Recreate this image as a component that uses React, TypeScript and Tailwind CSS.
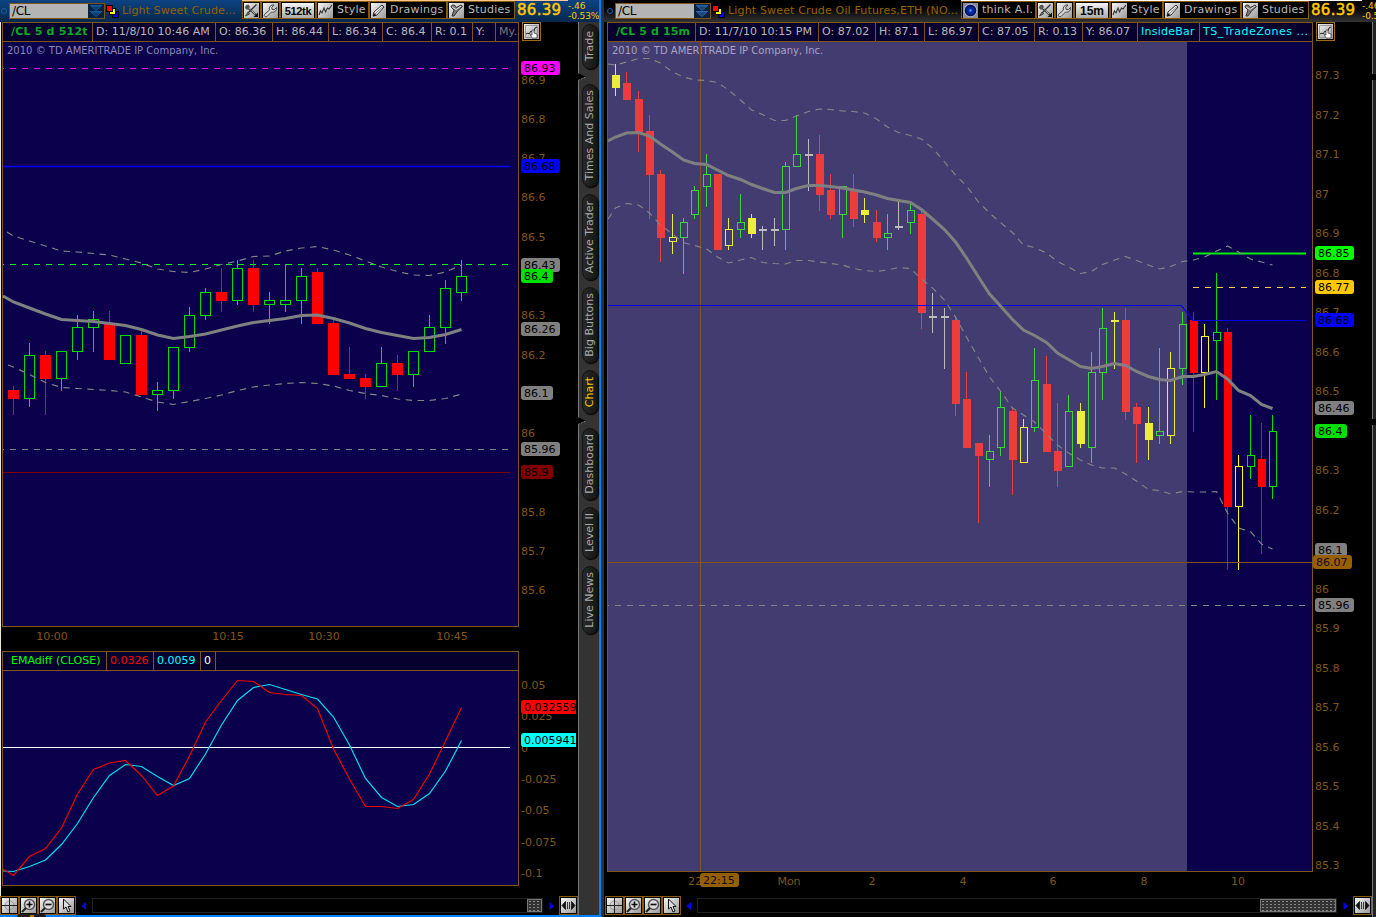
import React from "react"

const BROWN = "#80551a"
const GREY = "#808080"

type Candle = [string, number, number, number, number]
type Label = [number, string, string?]

// kind, body top, body bottom, wick top, wick bottom
// R red, G green outline, Y yellow solid, y yellow outline, W dash
const tickCandles: Candle[] = [
  ["R", 390, 399, 386, 415], ["G", 355, 399, 343, 407], ["R", 355, 379, 351, 415], ["G", 351, 379, 351, 391],
  ["G", 327, 352, 315, 360], ["G", 319, 328, 311, 352], ["R", 324, 360, 311, 360], ["G", 335, 364, 335, 364],
  ["R", 335, 395, 331, 395], ["G", 390, 395, 382, 411], ["G", 347, 391, 347, 399], ["G", 315, 348, 307, 352],
  ["G", 292, 316, 288, 320], ["R", 292, 301, 268, 312], ["G", 268, 301, 260, 305], ["R", 268, 305, 260, 312],
  ["G", 300, 305, 292, 324], ["G", 300, 305, 264, 312], ["G", 276, 301, 268, 324], ["R", 272, 324, 268, 324],
  ["R", 323, 375, 320, 375], ["R", 374, 379, 347, 379], ["R", 378, 387, 374, 399], ["G", 363, 387, 347, 387],
  ["R", 363, 375, 355, 391], ["G", 351, 375, 351, 387], ["G", 327, 352, 315, 352], ["G", 288, 328, 280, 344],
  ["G", 276, 293, 260, 301],
]

const minuteCandles: Candle[] = [
  ["Y", 75, 88, 64, 96], ["R", 83, 100, 72, 100], ["R", 99, 132, 91, 152], ["R", 131, 175, 115, 219],
  ["R", 174, 238, 170, 262], ["y", 237, 242, 214, 254], ["G", 222, 238, 218, 274], ["G", 190, 215, 186, 219],
  ["G", 174, 187, 154, 207], ["R", 174, 250, 174, 250], ["y", 229, 246, 218, 250], ["G", 222, 230, 194, 238],
  ["Y", 218, 234, 214, 238], ["W", 229, 231, 226, 250], ["W", 229, 231, 218, 246], ["G", 166, 230, 162, 250],
  ["G", 154, 167, 115, 167], ["W", 154, 156, 139, 191], ["R", 154, 195, 135, 211], ["R", 190, 215, 174, 219],
  ["G", 186, 215, 186, 238], ["R", 191, 219, 174, 227], ["Y", 210, 215, 198, 223], ["R", 222, 238, 210, 242],
  ["G", 233, 238, 214, 250], ["W", 226, 228, 202, 230], ["G", 210, 223, 202, 234], ["R", 214, 313, 210, 329],
  ["W", 316, 318, 293, 333], ["W", 316, 318, 308, 369], ["R", 320, 404, 316, 416], ["R", 399, 448, 372, 448],
  ["R", 443, 456, 443, 523], ["G", 451, 460, 435, 487], ["G", 407, 448, 391, 456], ["R", 411, 460, 407, 495],
  ["y", 427, 463, 419, 463], ["G", 380, 428, 348, 432], ["R", 384, 452, 356, 452], ["R", 451, 471, 403, 487],
  ["G", 411, 467, 395, 467], ["Y", 411, 444, 403, 448], ["G", 372, 448, 352, 463], ["G", 328, 373, 308, 400],
  ["Y", 320, 322, 312, 369], ["R", 320, 412, 308, 420], ["R", 407, 424, 403, 463], ["Y", 423, 440, 407, 460],
  ["G", 431, 436, 348, 444], ["y", 368, 436, 352, 444], ["G", 324, 369, 312, 385], ["R", 320, 373, 312, 432],
  ["y", 336, 373, 324, 408], ["G", 332, 341, 273, 400], ["R", 332, 507, 328, 570], ["y", 466, 507, 455, 570],
  ["G", 455, 467, 415, 479], ["R", 459, 487, 423, 554], ["G", 431, 487, 415, 499],
]

const tickX = (i: number) => 13 + 16 * i
const minuteX = (i: number) => 615 + Math.round((34 * i) / 3)

// first value sits on the left edge of the plot, the rest on the bars
const line = (xOf: (i: number) => number, startX: number, ys: number[]) =>
  ys.map((y, i) => `${i === 0 ? startX : xOf(i - 1) + 0.5},${y}`).join(" ")

const tickMid = [296, 302, 308, 314, 319.5, 320.5, 321.5, 323.5, 325.5, 329.5, 335, 338.5, 336.5, 334, 330, 326, 322.5, 320.5, 318.5, 315.5, 315, 318.5, 323, 328.5, 332.5, 335.5, 338.5, 337.5, 334.5, 329.5]
const tickUp = [232, 236, 241, 246, 251, 252, 253.5, 255, 259, 263, 269, 271.5, 272.5, 269, 264.5, 261, 256.5, 256, 251, 248, 246.5, 250, 255, 261, 267, 271.5, 275, 275.5, 272, 265]
const tickLow = [365, 367, 374.5, 382.5, 387.5, 388.5, 389.5, 390.5, 392, 397, 402, 404.5, 401.5, 398.5, 395, 390.5, 387, 385, 383.5, 382.5, 383.5, 386, 390.5, 393.5, 395.5, 399, 400.5, 400.5, 398.5, 394]
const emaRed = [869, 875.5, 856.5, 848.5, 828, 794, 769.5, 763, 760.5, 775.5, 795.5, 786, 756, 722, 700.5, 680.5, 681.5, 692.5, 694.5, 695.5, 708.5, 749, 779, 806.5, 806.5, 808.5, 799.5, 774, 741, 707.5]
const emaCyan = [871, 871.5, 866.5, 860, 844.5, 823.5, 797.5, 775.5, 764.5, 766.5, 776.5, 785.5, 778.5, 754, 725, 700.5, 687.5, 684.5, 689.5, 694.5, 699, 717, 745, 778.5, 797.5, 806.5, 804.5, 793.5, 771, 740.5]

const minMid = [141, 137, 133, 132.5, 136, 144, 152, 160, 163.5, 164.5, 170, 175.5, 179.5, 184.5, 188.5, 192.5, 192.5, 188.5, 185.5, 185.5, 186.5, 188, 190, 192, 195, 198.5, 200.5, 202.5, 209.5, 219, 229.5, 242, 258, 277, 294, 306, 319.5, 330, 335.5, 342.5, 353, 359.5, 366.5, 368.5, 366.5, 363.5, 365.5, 371.5, 376.5, 379.5, 380.5, 376.5, 376.5, 374.5, 371.5, 379, 390.5, 395.5, 404.5, 408.5]
const minUp = [64, 65, 62, 58.5, 58.5, 63, 72, 77, 80, 80.5, 82.5, 90, 100, 110, 114.5, 120.5, 120.5, 116, 111.5, 109, 109.5, 111, 111.5, 113, 119, 127, 132.5, 135.5, 139, 148, 162, 175, 186, 202, 213, 222.5, 232.5, 245, 247.5, 253, 261.5, 267, 273.5, 271.5, 264.5, 260, 256.5, 260.5, 265, 269, 266.5, 261.5, 260, 257, 251, 246, 252, 259, 262, 265]
const minLow = [219, 208, 203.5, 205, 213, 225, 234, 242.5, 245.5, 249, 257, 263, 260, 257.5, 262.5, 263.5, 264, 260.5, 260.5, 262, 263.5, 265, 268.5, 270.5, 271.5, 270, 267.5, 268.5, 279, 288, 300, 317, 337, 358, 377, 391, 408, 415, 422, 434, 445, 453, 460, 465, 468, 468, 474, 481, 489.5, 490.5, 494, 491.5, 492, 492, 491.5, 513, 528, 531.5, 544, 549]

const tickAxis: Label[] = [
  [80, "86.9"], [119, "86.8"], [158, "86.7"], [197, "86.6"], [237, "86.5"], [315, "86.3"], [355, "86.2"], [433, "86"],
  [512, "85.8"], [551, "85.7"], [590, "85.6"],
  [68, "86.93", "#ff00ff"], [166, "86.68", "#0000ff"], [265, "86.43", GREY], [276, "86.4", "#00e000"],
  [329, "86.26", GREY], [393, "86.1", GREY], [449, "85.96", GREY], [472, "85.9", "#800000"],
]

const emaAxis: Label[] = [
  [685, "0.05"], [716, "0.025"], [748, "0"], [779, "-0.025"], [810, "-0.05"], [842, "-0.075"], [873, "-0.1"],
  [707, "0.032559", "#ff0000"], [740, "0.005941", "#00ffff"],
]

const minuteAxis: Label[] = [
  [75, "87.3"], [115, "87.2"], [154, "87.1"], [194, "87"], [233, "86.9"], [273, "86.8"], [312, "86.7"], [352, "86.6"],
  [391, "86.5"], [470, "86.3"], [510, "86.2"], [589, "86"], [628, "85.9"], [668, "85.8"], [707, "85.7"], [747, "85.6"],
  [786, "85.5"], [826, "85.4"], [865, "85.3"],
  [253, "86.85", "#00ff00"], [287, "86.77", "#ffc800"], [320, "86.68", "#0000ff"], [408, "86.46", GREY],
  [431, "86.4", "#00e000"], [550, "86.1", GREY], [605, "85.96", GREY],
]

const candleColor: Record<string, string> = { R: "#ff0000", G: "#00e000", Y: "#ffff00", y: "#ffff00", W: "#b8b8b8" }

const Candles = ({ data, xOf, left, width }: { data: Candle[]; xOf: (i: number) => number; left: number; width: number }) => (
  <g shapeRendering="crispEdges">
    {data.map(([kind, top, bottom, high, low], i) => {
      const x = xOf(i)
      const color = candleColor[kind]
      const hollow = kind === "G" || kind === "y"
      return (
        <g key={i}>
          <rect x={x} y={high} width={1} height={hollow ? top - high : low - high} fill={color} />
          {hollow && <rect x={x} y={bottom} width={1} height={low - bottom} fill={color} />}
          {hollow ? (
            <rect x={x - left + 0.5} y={top + 0.5} width={width - 1} height={bottom - top - 1} fill="none" stroke={color} />
          ) : (
            <rect x={x - left} y={top} width={width} height={bottom - top} fill={color} />
          )}
        </g>
      )
    })}
  </g>
)

// long badges run off the right side of the axis
const badgePath = (x: number, y: number, text: string) =>
  text.length > 6
    ? `M${x + 3} ${y - 7}H${x + 55}V${y + 7}H${x + 3}q-3 0 -3 -3V${y - 4}q0 -3 3 -3z`
    : `M${x + 3} ${y - 7}h${text.length * 7 - 2}q3 0 3 3v8q0 3 -3 3h-${text.length * 7 - 2}q-3 0 -3 -3v-8q0 -3 3 -3z`

const Axis = ({ x, labels }: { x: number; labels: Label[] }) => (
  <g fontSize="11">
    {labels.map(([y, text, bg]) => (
      <g key={text + y}>
        {bg && <path d={badgePath(x, y, text)} fill={bg} />}
        <text x={bg ? x + 3 : x} y={bg ? y + 3.5 : y + 4} fill={bg ? "#000" : BROWN}>{text}</text>
      </g>
    ))}
  </g>
)

const Times = ({ y, items }: { y: number; items: [number, string][] }) => (
  <g fontSize="11" fill={BROWN} textAnchor="middle">
    {items.map(([x, text]) => <text key={x} x={x} y={y}>{text}</text>)}
  </g>
)

const Band = ({ points }: { points: string }) => (
  <polyline points={points} fill="none" stroke="#858585" strokeWidth="1.150" strokeDasharray="6.500 5.500" />
)

const IconFace = ({ children }: any) => (
  <svg width="15" height="15" viewBox="0 0 15 15" className="shrink-0">
    <defs>
      <linearGradient id="face" x1="0" y1="0" x2="1" y2="1">
        <stop offset="0" stopColor="#f4f4f4" />
        <stop offset="1" stopColor="#9a9a9a" />
      </linearGradient>
    </defs>
    <rect width="15" height="15" fill="url(#face)" />
    {children}
  </svg>
)

const ToolsIcon = () => (
  <IconFace>
    <path d="M3 4l9 8" stroke="#444" strokeWidth="2.200" />
    <path d="M4 4l7 7" stroke="#ccc" strokeWidth=".8" />
    <path d="M12.500 1.500L4 10" stroke="#333" strokeWidth="1.300" />
    <path d="M4 9l-2.500 4 4-2z" fill="#777" stroke="#333" strokeWidth=".8" />
    <path d="M1 5c0-3 2-4 4-3l1 2-3 3z" fill="#555" />
    <path d="M9.500 14h4.500V9.500z" fill="#111" />
  </IconFace>
)

const WrenchIcon = () => (
  <IconFace>
    <path d="M1.500 11.500L6.500 7C5.500 4 8 1.500 11 2L8.700 4.500l.5 2 2 .3L13.500 4.500c.5 3-2 5.500-5 4.500L4 13.500c-1.500 1-3.500-.5-2.500-2z" fill="#d8d8d8" stroke="#444" />
  </IconFace>
)

const StyleIcon = () => (
  <IconFace><path d="M1 12l1.500-4 1.500 2 2-5 1.500 4 2-4 1.500 1L14 2" fill="none" stroke="#333" strokeWidth="1.100" /></IconFace>
)

const PencilIcon = () => (
  <IconFace>
    <path d="M2 13l1-4 8-7 2 2-7 8z" fill="#eee" stroke="#333" />
    <path d="M4 11l8-7.500" stroke="#666" strokeWidth=".8" />
    <path d="M2 13.500l1-3.500 2.500 2.500z" fill="#111" />
  </IconFace>
)

const StudiesIcon = () => (
  <IconFace>
    <path d="M2 4c0-2 2-2.500 4-1.500l1.500 2L12 2l1.500 1.500L9 7.500 5 13H3l2-6z" fill="#777" stroke="#333" />
    <path d="M3 4l4 2.500 5-3.500" stroke="#ddd" fill="none" />
  </IconFace>
)

const EyeIcon = () => (
  <svg width="15" height="15" viewBox="0 0 15 15" className="shrink-0">
    <defs>
      <radialGradient id="eye">
        <stop offset="0" stopColor="#66c8ff" />
        <stop offset=".25" stopColor="#0834c0" />
        <stop offset="1" stopColor="#020845" />
      </radialGradient>
    </defs>
    <rect width="15" height="15" fill="#8a8a9c" />
    <circle cx="7.500" cy="7.500" r="6.300" fill="url(#eye)" stroke="#c8c8dd" strokeWidth=".9" />
  </svg>
)

const ShareIcon = () => (
  <div className="flex h-[19px] w-[19px] items-center justify-center border border-[#a06a10]">
    <IconFace>
      <path d="M1.500 1.500h12v12h-12z" stroke="#888" fill="none" strokeWidth=".8" />
      <path d="M2 10l2-1 1 1 2-3 2 2 2-5 2-1" stroke="#222" fill="none" />
      <path d="M8 14l-2-4 2 1V6h2v3l3 1v4z" fill="#fff" stroke="#444" strokeWidth=".8" />
    </IconFace>
  </div>
)

const ToolButton = ({ icon, children, className }: any) => (
  <div className={`flex h-[18px] shrink-0 items-center border border-[#8a5a08] bg-black pl-px text-[11px] leading-none text-[#b8b8b8] ${className}`}>
    {icon}
    {children && <span className="-mt-0.5 ml-1 tracking-[0.25px]">{children}</span>}
  </div>
)

const PeriodButton = ({ children, className }: any) => (
  <div className="flex h-[18px] w-9 shrink-0 items-center justify-center border border-[#8a5a08] bg-black">
    <b className={`flex h-[15px] w-8 items-center justify-center bg-linear-to-b from-[#f4f4f4] to-[#aaa] pt-0.5 font-['Liberation_Sans',sans-serif] leading-none text-black ${className}`}>{children}</b>
  </div>
)

const SymbolBox = ({ arrow }: { arrow: string }) => (
  <div className="flex h-4 w-24 shrink-0 border border-[#80551a] text-[12px] leading-[14px] text-black">
    <span className="w-[78px] bg-[#b4b4b4] pl-0.5 tracking-[-0.3px]">/CL</span>
    <svg width="16" height="14" viewBox="0 0 16 14" className="bg-[#07223f]">
      <path d="M2 1.500h12M2 7.500h12" stroke={arrow} />
      <path d="M3 2h10l-5 4.500zM3 8h10l-5 4.500z" fill={arrow} fillOpacity=".5" stroke={arrow} />
    </svg>
  </div>
)

const LinkSquares = () => (
  <svg width="13" height="13" viewBox="0 0 13 13" className="mt-0.5 shrink-0" shapeRendering="crispEdges">
    <path d="M6 6h7v7H6z" fill="#000" />
    <path d="M7 7h5v5H7z" fill="#00f" />
    <path d="M3 3h7v7H3z" fill="#000" />
    <path d="M4 4h5v5H4z" fill="#ff0" />
    <path d="M0 0h7v7H0z" fill="#000" />
    <path d="M1 1h5v5H1z" fill="#f00" />
  </svg>
)

const TitleBar = ({ title, period, className, titleClassName, periodClassName, arrow, dotClassName, thinkAi, lineClassName }: any) => (
  <div className={`flex h-[22px] w-full overflow-hidden ${className}`}>
    <div className="flex h-[21px] shrink-0 items-center">
      <div className={`mr-0.5 h-1.5 w-1.5 shrink-0 rounded-full border border-[#1560a8] ${dotClassName}`} />
      <SymbolBox arrow={arrow} />
      <div className="w-px" />
      <LinkSquares />
    </div>
    <div className={`shrink-0 overflow-hidden whitespace-nowrap pl-[3px] text-[11px] leading-[22px] text-[#966000] ${titleClassName}`}>{title}</div>
    <div className={`flex h-[21px] shrink-0 items-start border-t ${lineClassName}`}>
      {thinkAi && <ToolButton icon={<EyeIcon />} className="w-[75px]">think A.I.</ToolButton>}
      <ToolButton icon={<ToolsIcon />} className="w-[19px]" />
      <ToolButton icon={<WrenchIcon />} className="w-[19px]" />
      <PeriodButton className={periodClassName}>{period}</PeriodButton>
      <ToolButton icon={<StyleIcon />} className="w-[53px]">Style</ToolButton>
      <ToolButton icon={<PencilIcon />} className="w-[78px]">Drawings</ToolButton>
      <ToolButton icon={<StudiesIcon />} className="w-[68px]">Studies</ToolButton>
      <span className="w-[53px] pl-0.5 text-[15px] leading-[18px] tracking-[0.3px] text-[#ffc800] [-webkit-text-stroke:0.5px_#ffc800]">86.39</span>
    </div>
    <div className="shrink-0 whitespace-nowrap pt-px text-[9px] leading-[10px] text-[#ffc800]">
      <div>-.46</div>
      <div className="tracking-[-0.1px]">-0.53%</div>
    </div>
  </div>
)

const Cell = ({ className, children }: any) => (
  <div className={`shrink-0 overflow-hidden whitespace-nowrap border-r border-[#80551a] ${className}`}>
    <span className="ml-[3px]">{children}</span>
  </div>
)

const tabs: [string, string][] = [
  ["Trade", "h-[45px] mt-0.5 text-[#aaa]"], ["Times And Sales", "h-[103px] mt-[15px] text-[#aaa]"],
  ["Active Trader", "h-[86px] mt-[7px] text-[#aaa]"], ["Big Buttons", "h-[76px] mt-[7px] text-[#aaa]"],
  ["Chart", "h-11 mt-[7px] text-[#ffc800]"], ["Dashboard", "h-[72px] mt-[14px] text-[#aaa]"],
  ["Level II", "h-[52px] mt-[7px] text-[#aaa]"], ["Live News", "h-[68px] mt-[7px] text-[#aaa]"],
]

const Notch = ({ className }: any) => (
  <svg width="9" height="8" viewBox="0 0 9 8" className={`absolute left-[-1px] ${className}`}>
    <path d="M0 0l8 4-8 4z" fill="#000" />
    <path d="M0 7.500l8-3.500" stroke="#888" fill="none" strokeDasharray="2 1" />
  </svg>
)

const TabRail = () => (
  <div className="relative w-[21px] shrink-0 border-l border-[#777] bg-[#333]">
    <Notch className="top-[51px]" />
    <Notch className="top-[395px]" />
    {tabs.map(([name, cls]) => (
      <div key={name} className={`ml-[3px] flex w-4 items-center justify-center rounded-full border border-[#111] bg-linear-to-r from-[#2a2a2a] to-[#161616] text-[11px] leading-none shadow-[1px_1px_1px_#000] ${cls}`}>
        <span className="mr-0.5 rotate-180 whitespace-nowrap [writing-mode:vertical-rl]">{name}</span>
      </div>
    ))}
  </div>
)

const BarButton = ({ children }: any) => (
  <div className="flex h-[19px] w-[19px] shrink-0 items-center justify-center border border-[#8a5a08] bg-black">
    <IconFace>{children}</IconFace>
  </div>
)

const Zoomer = ({ plus }: { plus?: boolean }) => (
  <BarButton>
    <circle cx="8.500" cy="6.500" r="5" fill="#ddd" stroke="#555" strokeWidth="1.500" />
    <path d="M5 10l-4 4" stroke="#222" strokeWidth="2.200" />
    <path d={plus ? "M5.500 6.500h6M8.500 3.500v6" : "M5.500 6.500h6"} stroke="#111" strokeWidth="1.700" />
  </BarButton>
)

const ScrollBar = ({ thumbClassName, trackClassName, arrowClassName, className }: any) => (
  <div className={`flex h-[19px] items-center ${className}`}>
    <BarButton>
      <circle cx="7.500" cy="7.500" r="4.500" fill="none" stroke="#999" />
      <path d="M0 7.500h15M7.500 0v15" stroke="#222" />
    </BarButton>
    <Zoomer plus />
    <Zoomer />
    <BarButton><path d="M4.500 1v10l2.500-2 2 5 2-1-2-4.500h3z" fill="#ddd" stroke="#111" /></BarButton>
    <svg width="16" height="10" viewBox="0 0 16 10" className="shrink-0"><path d="M10 1v8L5.500 5z" fill="#0000ff" /></svg>
    <div className={`flex h-[15px] shrink-0 justify-end border border-[#222] bg-black ${trackClassName}`}>
      <div className={`h-[13px] border border-[#777] bg-[#333] bg-[radial-gradient(#888_0.6px,transparent_0.8px)] bg-size-[4px_3px] ${thumbClassName}`} />
    </div>
    <svg height="10" viewBox="0 0 16 10" className={`shrink-0 ${arrowClassName}`}><path d="M6.500 1v8l4.500-4z" fill="#0000ff" /></svg>
    <BarButton><path d="M1 7.500l3.500-4v8zM14 7.500l-3.500-4v8zM6.500 4v7M8.500 4v7" fill="#111" stroke="#111" strokeWidth=".8" /></BarButton>
  </div>
)

const TickWindow = () => (
  <div className="relative flex w-[601px] shrink-0 flex-col border-b-2 border-r-2 border-[#0080ff]">
    <TitleBar
      title="Light Sweet Crude..."
      period="512tk"
      arrow="#1458a0"
      className="bg-linear-to-b from-[#0d4382] to-[#06284c]"
      dotClassName="ml-px"
      titleClassName="w-[123px] tracking-[0.1px]"
      periodClassName="text-[11px] tracking-[-0.3px]"
      lineClassName="border-[#ffc890]"
    />
    <div className="flex h-[893px]">
      <div className="flex w-[578px] shrink-0 flex-col border-l border-[#e8e8e0]">
        <div className="flex h-5">
          <div className="ml-px flex h-5 w-[517px] overflow-hidden border border-[#80551a] bg-[#07002f] text-[11px] leading-[17px] text-[#b8b8b8]">
            <Cell className="w-[90px] pl-[5px] font-bold tracking-[0.2px] text-[#10a828]">/CL 5 d 512t</Cell>
            <Cell className="w-[123px]">D: 11/8/10 10:46 AM</Cell>
            <Cell className="w-[57px]">O: 86.36</Cell>
            <Cell className="w-14">H: 86.44</Cell>
            <Cell className="w-[54px]">L: 86.34</Cell>
            <Cell className="w-[49px]">C: 86.4</Cell>
            <Cell className="w-[41px]">R: 0.1</Cell>
            <Cell className="w-[23px]">Y:</Cell>
            <div className="pl-[3px] text-[#777]">My.</div>
          </div>
          <div className="ml-[3px]"><ShareIcon /></div>
        </div>
        <svg width="577" height="609" viewBox="1 42 577 609" className="block font-['DejaVu_Sans',sans-serif]">
          <rect x="2.500" y="41.500" width="516" height="585" fill="#0a004c" stroke={BROWN} />
          <text x="7" y="54" fontSize="10" fill="#8f88b8">2010 © TD AMERITRADE IP Company, Inc.</text>
          <path d="M3 68.500H510" stroke="#ff00ff" strokeDasharray="6 6" strokeDashoffset="5" />
          <path d="M3 264.500H510" stroke="#00ff00" strokeDasharray="6 6" strokeDashoffset="5" />
          <path d="M3 449.500H510" stroke={GREY} strokeDasharray="6 6" strokeDashoffset="5" />
          <path d="M3 166.500H510" stroke="#0000ff" strokeWidth="1.500" />
          <path d="M3 472.500H510" stroke="#800000" />
          <Candles data={tickCandles} xOf={tickX} left={5} width={11} />
          <Band points={line(tickX, 7, tickUp)} />
          <Band points={line(tickX, 8, tickLow)} />
          <polyline points={line(tickX, 3, tickMid)} fill="none" stroke={GREY} strokeWidth="3" />
          <Axis x={521} labels={tickAxis} />
          <Times y={640} items={[[52, "10:00"], [228, "10:15"], [324, "10:30"], [452, "10:45"]]} />
        </svg>
        <div className="ml-px flex h-5 w-[517px] border border-[#80551a] bg-[#07002f] text-[11px] leading-[17px]">
          <Cell className="w-[104px] pl-[5px] text-[#00ff00]">EMAdiff (CLOSE)</Cell>
          <Cell className="w-[47px] text-[#ff0000]">0.0326</Cell>
          <Cell className="w-[47px] text-[#00ffff]">0.0059</Cell>
          <Cell className="w-[15px] text-white">0</Cell>
        </div>
        <svg width="577" height="225" viewBox="1 671 577 225" className="block font-['DejaVu_Sans',sans-serif]">
          <rect x="2.500" y="670.500" width="516" height="215" fill="#0a004c" stroke={BROWN} />
          <path d="M3 747.500H510" stroke="#fff" />
          <polyline points={line(tickX, 3, emaCyan)} fill="none" stroke="#00e0f0" strokeWidth="1.200" />
          <polyline points={line(tickX, 3, emaRed)} fill="none" stroke="#f00000" strokeWidth="1.200" />
          <Axis x={521} labels={emaAxis} />
          <rect x="576" y="695" width="2" height="60" fill="#000" />
        </svg>
        <ScrollBar className="-ml-px w-[578px]" trackClassName="w-[451px]" thumbClassName="w-[15px]" arrowClassName="w-4" />
      </div>
      <TabRail />
    </div>
    <div className="absolute -bottom-0.5 left-[17px] h-[3px] w-[29px] rounded-t bg-[#1c1c1c]">
      <div className="mx-auto mt-px h-0.5 w-1 bg-[#b07a10]" />
    </div>
  </div>
)

const MinuteWindow = () => (
  <div className="flex w-[775px] shrink-0">
    <div className="w-[3px] shrink-0 bg-[#111] bg-[radial-gradient(#555_0.6px,transparent_0.8px)] bg-size-[2px_2px]" />
    <div className="flex w-[772px] shrink-0 flex-col">
      <TitleBar
        title="Light Sweet Crude Oil Futures,ETH (NO..."
        period="15m"
        arrow="#2a64a8"
        thinkAi
        className="bg-linear-to-b from-black to-[#333]"
        dotClassName="ml-[3px]"
        titleClassName="w-[236px] tracking-[0.16px]"
        periodClassName="text-[12px]"
        lineClassName="border-white"
      />
      <div className="flex h-[895px]">
        <div className="flex w-[768px] shrink-0 flex-col">
          <div className="flex h-5">
            <div className="ml-[3px] flex h-5 w-[706px] overflow-hidden border border-[#80551a] bg-[#07002f] text-[11px] leading-[17px] text-[#b8b8b8]">
              <Cell className="w-[88px] pl-[5px] font-bold tracking-[0.1px] text-[#10a828]">/CL 5 d 15m</Cell>
              <Cell className="w-[123px]">D: 11/7/10 10:15 PM</Cell>
              <Cell className="w-[57px]">O: 87.02</Cell>
              <Cell className="w-[49px]">H: 87.1</Cell>
              <Cell className="w-[54px]">L: 86.97</Cell>
              <Cell className="w-14">C: 87.05</Cell>
              <Cell className="w-12">R: 0.13</Cell>
              <Cell className="w-[55px]">Y: 86.07</Cell>
              <Cell className="w-[62px] tracking-[0.25px] text-[#00ffff]">InsideBar</Cell>
              <div className="pl-[3px] tracking-[0.5px] text-[#00ffff]">TS_TradeZones ...</div>
            </div>
            <div className="ml-[3px]"><ShareIcon /></div>
          </div>
          <svg width="768" height="854" viewBox="604 42 768 854" className="block font-['DejaVu_Sans',sans-serif]">
            <rect x="607.500" y="41.500" width="705" height="830" fill="#0a004c" stroke={BROWN} />
            <Candles data={minuteCandles} xOf={minuteX} left={3} width={8} />
            {/* overnight session */}
            <rect x="608" y="42" width="579" height="829" fill="#c2c2c2" fillOpacity=".31" />
            <text x="612" y="54" fontSize="10" fill="#a8a4c4">2010 © TD AMERITRADE IP Company, Inc.</text>
            <path d="M700.500 42V871M608 562.500H1312" stroke={BROWN} />
            <path d="M608 605.500H1306" stroke="#858585" strokeDasharray="6 6" strokeDashoffset="5" />
            <path d="M1193 253.500H1306" stroke="#00f010" strokeWidth="2" />
            <path d="M1193 287.500H1306" stroke="#ffc840" strokeDasharray="6 6" />
            <path d="M608 305.500H1181.500L1193 320.500H1306" stroke="#0000e0" fill="none" strokeWidth="1.200" />
            <Band points={line(minuteX, 608, minUp)} />
            <Band points={line(minuteX, 608, minLow)} />
            <polyline points={line(minuteX, 608, minMid)} fill="none" stroke={GREY} strokeWidth="3" />
            <Axis x={1315} labels={minuteAxis} />
            <rect x="1313" y="555" width="39" height="14" rx="3" fill="#966000" />
            <text x="1316" y="566" fontSize="11" fill="#14082c">86.07</text>
            <Times y={885} items={[[695, "22"], [789, "Mon"], [872, "2"], [963, "4"], [1053, "6"], [1144, "8"], [1238, "10"]]} />
            <rect x="700" y="873" width="39" height="14" rx="3" fill="#966000" />
            <text x="703" y="884" fontSize="11" fill="#14082c">22:15</text>
          </svg>
          <ScrollBar className="ml-px w-[767px]" trackClassName="w-[640px]" thumbClassName="w-[76px]" arrowClassName="w-4" />
        </div>
        <div className="relative w-1 border-l border-[#777] bg-[#222]">
          <div className="absolute -left-px top-[52px] h-1.5 w-[5px] bg-black" />
          <div className="absolute -left-px top-[397px] h-1.5 w-[5px] bg-black" />
        </div>
      </div>
    </div>
  </div>
)

export default function App() {
  return (
    <div className="flex h-[917px] w-[1376px] overflow-hidden bg-black font-['DejaVu_Sans',sans-serif]">
      <TickWindow />
      <MinuteWindow />
    </div>
  )
}
